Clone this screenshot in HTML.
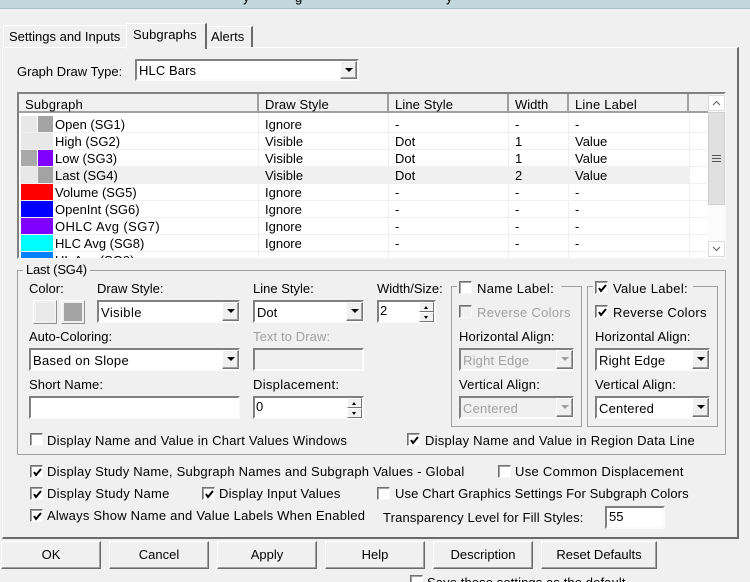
<!DOCTYPE html>
<html><head><meta charset="utf-8"><style>
html{margin:0;padding:0;width:750px;height:582px;overflow:hidden}
body{margin:0;padding:0;width:750px;height:582px;background:#f0f0f0;position:relative;overflow:hidden;font:13px/16px "Liberation Sans",sans-serif;color:#000}
#w{left:0;top:0;width:750px;height:582px;overflow:hidden;background:#f0f0f0}
div,span{position:absolute;box-sizing:border-box}
.t{white-space:nowrap;margin-top:1px}
.d{color:#a0a0a0}
.f{background:#fff;border:2px solid;border-color:#808080 #fbfbfb #fbfbfb #808080}
.f.x{background:#f0f0f0}
.b{width:17px;background:#f0f0f0;border:1px solid;border-color:#fff #777 #777 #fff;box-shadow:inset -1px -1px 0 #a0a0a0}
.b:after{content:"";position:absolute;left:4px;top:6px;border:4px solid transparent;border-top:4px solid #000;border-bottom:0}
.b.g:after{border-top-color:#a0a0a0}
.u,.v{width:15px;height:10px;background:#f0f0f0;border:1px solid;border-color:#fff #777 #777 #fff}
.u:after,.v:after{content:"";position:absolute;left:4px;top:3px;border:2.5px solid transparent}
.u:after{border-bottom:3px solid #000;border-top:0}
.v:after{border-top:3px solid #000;border-bottom:0}
.c{width:13px;height:13px;background:#fff;border:1px solid;border-color:#707070 #f8f8f8 #f8f8f8 #707070;box-shadow:inset 1px 1px 0 #a0a0a0}
.c.x{background:#f0f0f0}
.c svg{position:absolute;left:1px;top:1px}
.btn{height:28px;top:541px;border:1px solid;border-color:#fff #6a6a6a #6a6a6a #fff;box-shadow:inset -1px -1px 0 #a0a0a0;text-align:center;line-height:26px;background:#f0f0f0}
.gb{border:1px solid #a0a0a0}
.l{background:#f0f0f0;height:1px}
.s{width:16px;height:16px}
</style></head><body><div id="w">
<div style="left:0;top:0;width:750px;height:9px;background:#c3d7df;border-bottom:1px solid #a9c0ca"></div>
<div class="t" style="left:243px;top:-11px">y</div><div class="t" style="left:295px;top:-11px">g</div><div class="t" style="left:446px;top:-11px">y</div>

<div style="left:2px;top:47px;width:737px;height:492px;border:1px solid #fff;border-right:2px solid #6a6a6a;border-bottom:2px solid #6a6a6a;border-left:1px solid #fff"></div>
<div style="left:3px;top:25px;width:124px;height:23px;border:1px solid #fff;border-bottom:0;border-right:1px solid #a0a0a0"></div>
<div class="t" style="left:9px;top:28px">Settings and Inputs</div>
<div style="left:126px;top:23px;width:81px;height:26px;background:#f0f0f0;border:1px solid #fff;border-bottom:0;border-right:2px solid #6a6a6a"></div>
<div class="t" style="left:133px;top:26px;letter-spacing:.1px">Subgraphs</div>
<div style="left:207px;top:26px;width:46px;height:21px;border-top:1px solid #fff;border-right:2px solid #6a6a6a"></div>
<div class="t" style="left:211px;top:28px">Alerts</div>

<div class="t" style="left:17px;top:63px">Graph Draw Type:</div>
<div class="f" style="left:135px;top:59px;width:224px;height:22px"></div>
<div class="t" style="left:139px;top:62px;letter-spacing:.1px">HLC Bars</div>
<div class="b" style="left:340px;top:61px;height:18px"></div>

<!-- table -->
<div style="left:17px;top:92px;width:709px;height:167px;background:#fff;border:2px solid;border-color:#808080 #f8f8f8 #f8f8f8 #808080"></div>
<div style="left:19px;top:94px;width:689px;height:19px;background:#f0f0f0;border-bottom:2px solid #a0a0a0"></div>
<div style="left:257px;top:94px;width:2px;height:19px;background:#a0a0a0"></div>
<div style="left:387px;top:94px;width:2px;height:19px;background:#a0a0a0"></div>
<div style="left:507px;top:94px;width:2px;height:19px;background:#a0a0a0"></div>
<div style="left:567px;top:94px;width:2px;height:19px;background:#a0a0a0"></div>
<div style="left:687px;top:94px;width:2px;height:19px;background:#a0a0a0"></div>
<div class="t" style="left:25px;top:96px;letter-spacing:.2px">Subgraph</div>
<div class="t" style="left:265px;top:96px;letter-spacing:.1px">Draw Style</div>
<div class="t" style="left:395px;top:96px;letter-spacing:.1px">Line Style</div>
<div class="t" style="left:515px;top:96px">Width</div>
<div class="t" style="left:575px;top:96px;letter-spacing:.2px">Line Label</div>

<!-- row highlight -->
<div style="left:20px;top:167px;width:670px;height:17px;background:#f0f0f0"></div>
<!-- grid -->
<div class="l" style="left:20px;top:132px;width:687px"></div>
<div class="l" style="left:20px;top:149px;width:687px"></div>
<div class="l" style="left:20px;top:166px;width:687px"></div>
<div class="l" style="left:20px;top:183px;width:687px"></div>
<div class="l" style="left:20px;top:200px;width:687px"></div>
<div class="l" style="left:20px;top:217px;width:687px"></div>
<div class="l" style="left:20px;top:234px;width:687px"></div>
<div class="l" style="left:20px;top:251px;width:687px"></div>
<div style="left:258px;top:113px;width:1px;height:144px;background:#f0f0f0"></div>
<div style="left:388px;top:113px;width:1px;height:144px;background:#f0f0f0"></div>
<div style="left:508px;top:113px;width:1px;height:144px;background:#f0f0f0"></div>
<div style="left:568px;top:113px;width:1px;height:144px;background:#f0f0f0"></div>
<div style="left:689px;top:113px;width:1px;height:144px;background:#f0f0f0"></div>

<!-- swatches -->
<div class="s" style="left:21px;top:116px;background:#e8e8e8"></div><div class="s" style="left:38px;top:116px;width:15px;background:#a3a3a3"></div>
<div class="s" style="left:21px;top:133px;width:32px;background:#e8e8e8"></div>
<div class="s" style="left:21px;top:150px;background:#a9a9a9"></div><div class="s" style="left:38px;top:150px;width:15px;background:#8000ff"></div>
<div class="s" style="left:21px;top:167px;background:#e8e8e8"></div><div class="s" style="left:38px;top:167px;width:15px;background:#a3a3a3"></div>
<div class="s" style="left:21px;top:184px;width:32px;background:#ff0000"></div>
<div class="s" style="left:21px;top:201px;width:32px;background:#0000ff"></div>
<div class="s" style="left:21px;top:218px;width:32px;background:#8000ff"></div>
<div class="s" style="left:21px;top:235px;width:32px;background:#00ffff"></div>
<div class="s" style="left:21px;top:252px;width:32px;height:6px;background:#0080ff"></div>

<div class="t" style="left:55px;top:116px">Open (SG1)</div><div class="t" style="left:265px;top:116px">Ignore</div><div class="t" style="left:395px;top:116px">-</div><div class="t" style="left:515px;top:116px">-</div><div class="t" style="left:575px;top:116px">-</div>
<div class="t" style="left:55px;top:133px">High (SG2)</div><div class="t" style="left:265px;top:133px">Visible</div><div class="t" style="left:395px;top:133px">Dot</div><div class="t" style="left:515px;top:133px">1</div><div class="t" style="left:575px;top:133px">Value</div>
<div class="t" style="left:55px;top:150px">Low (SG3)</div><div class="t" style="left:265px;top:150px">Visible</div><div class="t" style="left:395px;top:150px">Dot</div><div class="t" style="left:515px;top:150px">1</div><div class="t" style="left:575px;top:150px">Value</div>
<div class="t" style="left:55px;top:167px">Last (SG4)</div><div class="t" style="left:265px;top:167px">Visible</div><div class="t" style="left:395px;top:167px">Dot</div><div class="t" style="left:515px;top:167px">2</div><div class="t" style="left:575px;top:167px">Value</div>
<div class="t" style="left:55px;top:184px">Volume (SG5)</div><div class="t" style="left:265px;top:184px">Ignore</div><div class="t" style="left:395px;top:184px">-</div><div class="t" style="left:515px;top:184px">-</div><div class="t" style="left:575px;top:184px">-</div>
<div class="t" style="left:55px;top:201px">OpenInt (SG6)</div><div class="t" style="left:265px;top:201px">Ignore</div><div class="t" style="left:395px;top:201px">-</div><div class="t" style="left:515px;top:201px">-</div><div class="t" style="left:575px;top:201px">-</div>
<div class="t" style="left:55px;top:218px;letter-spacing:.4px">OHLC Avg (SG7)</div><div class="t" style="left:265px;top:218px">Ignore</div><div class="t" style="left:395px;top:218px">-</div><div class="t" style="left:515px;top:218px">-</div><div class="t" style="left:575px;top:218px">-</div>
<div class="t" style="left:55px;top:235px">HLC Avg (SG8)</div><div class="t" style="left:265px;top:235px">Ignore</div><div class="t" style="left:395px;top:235px">-</div><div class="t" style="left:515px;top:235px">-</div><div class="t" style="left:575px;top:235px">-</div>
<div style="left:19px;top:252px;width:689px;height:6px;overflow:hidden"><div class="t" style="left:36px;top:0">HL Avg (SG9)</div></div>

<!-- scrollbar -->
<div style="left:708px;top:94px;width:17px;height:164px;background:#fbfbfb"></div>
<div style="left:708px;top:95px;width:17px;height:16px;background:#fff;border:1px solid #dcdcdc"><svg width="15" height="14" style="position:absolute;left:0;top:0"><path d="M4 9l3.5-3.5L11 9" fill="none" stroke="#606060"/></svg></div>
<div style="left:708px;top:112px;width:17px;height:93px;background:#e0e0e0;border:1px solid #d0d0d0"></div>
<div style="left:712px;top:155px;width:9px;height:7px;border-top:1px solid #555;border-bottom:1px solid #555"></div><div style="left:712px;top:158px;width:9px;height:1px;background:#555"></div>
<div style="left:708px;top:241px;width:17px;height:16px;background:#fff;border:1px solid #dcdcdc"><svg width="15" height="14" style="position:absolute;left:0;top:0"><path d="M4 5l3.5 3.5L11 5" fill="none" stroke="#606060"/></svg></div>

<!-- group -->
<div class="gb" style="left:17px;top:270px;width:709px;height:185px"></div>
<div class="t" style="left:23px;top:262px;background:#f0f0f0;padding:0 3px;height:14px;line-height:14px;letter-spacing:-.2px">Last (SG4)</div>

<div class="t" style="left:29px;top:280px">Color:</div>
<div style="left:33px;top:300px;width:24px;height:24px;background:#e9e9e9;border:1px solid;border-color:#fff #909090 #909090 #fff;box-shadow:inset 0 0 0 2px #f0f0f0"></div>
<div style="left:61px;top:300px;width:24px;height:24px;background:#a3a3a3;border:1px solid;border-color:#fff #909090 #909090 #fff;box-shadow:inset 0 0 0 2px #f0f0f0"></div>

<div class="t" style="left:97px;top:280px">Draw Style:</div>
<div class="f" style="left:97px;top:300px;width:143px;height:23px"></div>
<div class="t" style="left:101px;top:304px;letter-spacing:.4px">Visible</div>
<div class="b" style="left:222px;top:302px;height:19px"></div>

<div class="t" style="left:29px;top:328px">Auto-Coloring:</div>
<div class="f" style="left:29px;top:348px;width:211px;height:23px"></div>
<div class="t" style="left:33px;top:352px;letter-spacing:.3px">Based on Slope</div>
<div class="b" style="left:222px;top:350px;height:19px"></div>

<div class="t" style="left:29px;top:376px;letter-spacing:.1px">Short Name:</div>
<div class="f" style="left:29px;top:396px;width:211px;height:23px"></div>

<div class="c" style="left:30px;top:433px"></div>
<div class="t" style="left:47px;top:432px;letter-spacing:.22px">Display Name and Value in Chart Values Windows</div>

<div class="t" style="left:253px;top:280px">Line Style:</div>
<div class="f" style="left:253px;top:300px;width:111px;height:23px"></div>
<div class="t" style="left:257px;top:304px">Dot</div>
<div class="b" style="left:346px;top:302px;height:19px"></div>

<div class="t d" style="left:253px;top:328px;letter-spacing:.1px">Text to Draw:</div>
<div class="f x" style="left:253px;top:348px;width:111px;height:23px"></div>

<div class="t" style="left:253px;top:376px;letter-spacing:.3px">Displacement:</div>
<div class="f" style="left:253px;top:396px;width:111px;height:23px"></div>
<div class="t" style="left:256px;top:398px">0</div>
<div class="u" style="left:347px;top:398px"></div>
<div class="v" style="left:347px;top:408px"></div>

<div class="t" style="left:377px;top:280px">Width/Size:</div>
<div class="f" style="left:377px;top:300px;width:59px;height:23px"></div>
<div class="t" style="left:380px;top:302px">2</div>
<div class="u" style="left:419px;top:302px"></div>
<div class="v" style="left:419px;top:312px"></div>

<!-- Name label box -->
<div class="gb" style="left:451px;top:286px;width:131px;height:141px"></div>
<div style="left:457px;top:280px;width:104px;height:14px;background:#f0f0f0"></div>
<div class="c" style="left:459px;top:281px"></div>
<div class="t" style="left:477px;top:280px;letter-spacing:.3px">Name Label:</div>
<div class="c x" style="left:459px;top:305px"></div>
<div class="t d" style="left:477px;top:304px;letter-spacing:.3px">Reverse Colors</div>
<div class="t" style="left:459px;top:328px;letter-spacing:.1px">Horizontal Align:</div>
<div class="f x" style="left:459px;top:348px;width:115px;height:23px"></div>
<div class="t d" style="left:463px;top:352px;letter-spacing:.2px">Right Edge</div>
<div class="b g" style="left:556px;top:350px;height:19px"></div>
<div class="t" style="left:459px;top:376px;letter-spacing:.2px">Vertical Align:</div>
<div class="f x" style="left:459px;top:396px;width:115px;height:23px"></div>
<div class="t d" style="left:463px;top:400px;letter-spacing:.2px">Centered</div>
<div class="b g" style="left:556px;top:398px;height:19px"></div>

<!-- Value label box -->
<div class="gb" style="left:587px;top:286px;width:131px;height:141px"></div>
<div style="left:593px;top:280px;width:100px;height:14px;background:#f0f0f0"></div>
<div class="c" style="left:595px;top:281px"><svg width="11" height="11"><path d="M2 5l2 3 5-6" fill="none" stroke="#000" stroke-width="2"/></svg></div>
<div class="t" style="left:613px;top:280px;letter-spacing:.3px">Value Label:</div>
<div class="c" style="left:595px;top:305px"><svg width="11" height="11"><path d="M2 5l2 3 5-6" fill="none" stroke="#000" stroke-width="2"/></svg></div>
<div class="t" style="left:613px;top:304px;letter-spacing:.3px">Reverse Colors</div>
<div class="t" style="left:595px;top:328px;letter-spacing:.1px">Horizontal Align:</div>
<div class="f" style="left:595px;top:348px;width:115px;height:23px"></div>
<div class="t" style="left:599px;top:352px;letter-spacing:.2px">Right Edge</div>
<div class="b" style="left:692px;top:350px;height:19px"></div>
<div class="t" style="left:595px;top:376px;letter-spacing:.2px">Vertical Align:</div>
<div class="f" style="left:595px;top:396px;width:115px;height:23px"></div>
<div class="t" style="left:599px;top:400px;letter-spacing:.2px">Centered</div>
<div class="b" style="left:692px;top:398px;height:19px"></div>

<div class="c" style="left:407px;top:433px"><svg width="11" height="11"><path d="M2 5l2 3 5-6" fill="none" stroke="#000" stroke-width="2"/></svg></div>
<div class="t" style="left:425px;top:432px;letter-spacing:.24px">Display Name and Value in Region Data Line</div>

<!-- bottom options -->
<div class="c" style="left:30px;top:465px"><svg width="11" height="11"><path d="M2 5l2 3 5-6" fill="none" stroke="#000" stroke-width="2"/></svg></div>
<div class="t" style="left:47px;top:463px;letter-spacing:.23px">Display Study Name, Subgraph Names and Subgraph Values - Global</div>
<div class="c" style="left:498px;top:465px"></div>
<div class="t" style="left:515px;top:463px;letter-spacing:.3px">Use Common Displacement</div>

<div class="c" style="left:30px;top:487px"><svg width="11" height="11"><path d="M2 5l2 3 5-6" fill="none" stroke="#000" stroke-width="2"/></svg></div>
<div class="t" style="left:47px;top:485px;letter-spacing:.27px">Display Study Name</div>
<div class="c" style="left:202px;top:487px"><svg width="11" height="11"><path d="M2 5l2 3 5-6" fill="none" stroke="#000" stroke-width="2"/></svg></div>
<div class="t" style="left:219px;top:485px;letter-spacing:.2px">Display Input Values</div>
<div class="c" style="left:377px;top:487px"></div>
<div class="t" style="left:395px;top:485px;letter-spacing:.1px">Use Chart Graphics Settings For Subgraph Colors</div>

<div class="c" style="left:30px;top:509px"><svg width="11" height="11"><path d="M2 5l2 3 5-6" fill="none" stroke="#000" stroke-width="2"/></svg></div>
<div class="t" style="left:47px;top:507px;letter-spacing:.23px">Always Show Name and Value Labels When Enabled</div>
<div class="t" style="left:383px;top:509px;letter-spacing:.15px">Transparency Level for Fill Styles:</div>
<div class="f" style="left:605px;top:506px;width:60px;height:23px"></div>
<div class="t" style="left:609px;top:508px">55</div>

<!-- buttons -->
<div class="btn" style="left:1px;width:100px">OK</div>
<div class="btn" style="left:109px;width:100px">Cancel</div>
<div class="btn" style="left:217px;width:100px">Apply</div>
<div class="btn" style="left:325px;width:100px">Help</div>
<div class="btn" style="left:433px;width:100px">Description</div>
<div class="btn" style="left:541px;width:116px">Reset Defaults</div>

<div class="c" style="left:410px;top:575px"></div>
<div class="t" style="left:427px;top:574px;letter-spacing:.1px">Save these settings as the default</div>
</div></body></html>
